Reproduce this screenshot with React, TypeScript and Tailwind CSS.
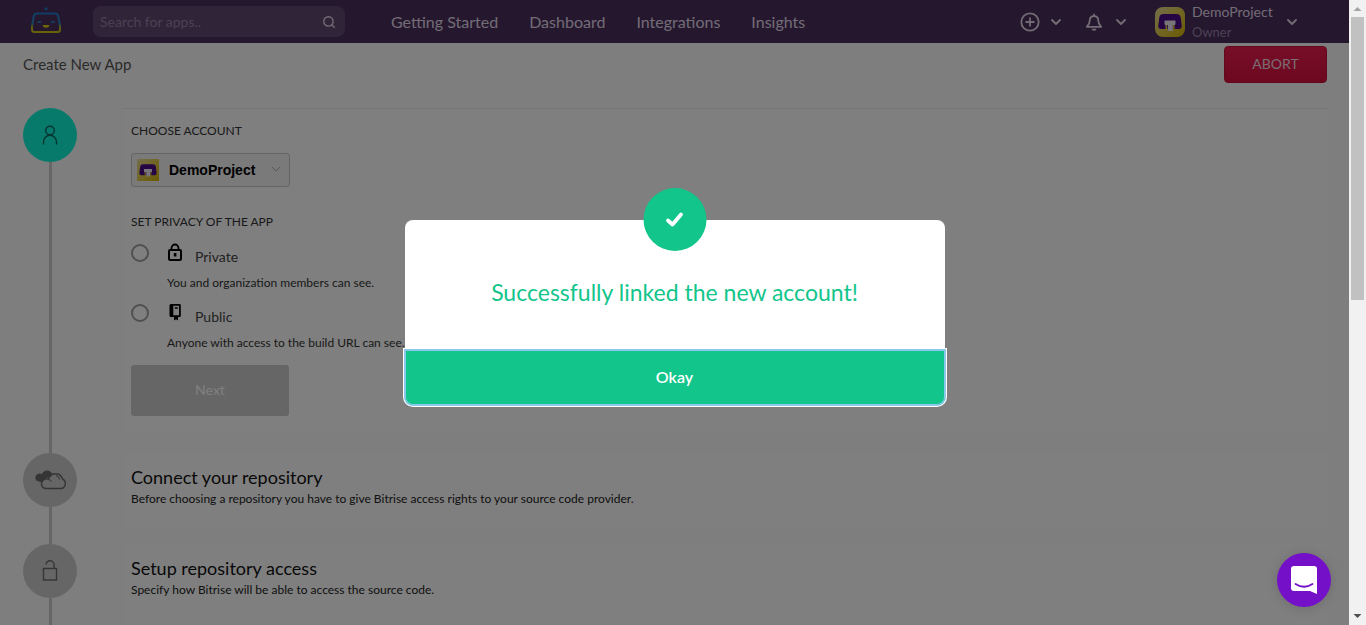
import React from "react";
import { ChevronDown, Search } from "lucide-react";

const navLinks = ["Getting Started", "Dashboard", "Integrations", "Insights"];

function RobotLogo() {
  return (
    <svg viewBox="0 0 32 28" className="h-7 w-8" fill="none" aria-hidden="true">
      <defs>
        <linearGradient id="logo" x1="0" y1="6" x2="0" y2="27" gradientUnits="userSpaceOnUse">
          <stop offset="0" stopColor="#1f78d0" />
          <stop offset="0.55" stopColor="#2f88c0" />
          <stop offset="0.72" stopColor="#b8b020" />
          <stop offset="1" stopColor="#d8cc10" />
        </linearGradient>
      </defs>
      <circle cx="16" cy="2.800" r="1.500" fill="#1f78d0" />
      <path
        d="M7 7.500h18c2 0 3 1 3.300 3l1.700 9.500v3.500c0 1.700-1 2.500-2.500 2.500h-23C3 26 2 25.200 2 23.500V20l1.700-9.500C4 8.500 5 7.500 7 7.500z"
        stroke="url(#logo)"
        strokeWidth="2"
      />
      <path d="M7.500 16.500q1.800-1.500 3.600 0M21 16.500q1.800-1.500 3.600 0" stroke="#1f88d8" strokeWidth="1.500" />
      <path d="M12.700 19h6.600a3.300 2.800 0 0 1-6.600 0z" fill="#e0cc10" />
    </svg>
  );
}

function Avatar({ className }: { className: string }) {
  return (
    <svg viewBox="0 0 30 30" className={className} aria-hidden="true">
      <defs>
        <linearGradient id="gold" x1="0" y1="0" x2="1" y2="1">
          <stop offset="0" stopColor="#e8dc98" />
          <stop offset="0.5" stopColor="#e2cc4c" />
          <stop offset="1" stopColor="#d8b400" />
        </linearGradient>
      </defs>
      <rect width="30" height="30" fill="url(#gold)" />
      <path
        d="M8.500 7h13c2.500 0 3.700 1 4.200 3.500l1 8c.3 2.300-.7 3.500-2.700 3.500h-4.500v-4H18v4h-6v-4h-1.500v4H6c-2 0-3-1.200-2.700-3.500l1-8C4.800 8 6 7 8.500 7z"
        fill="#4a0a86"
      />
      <path d="M9.500 13.500h11V17q0 1-1 1H17.800v6h-5v-6h-2.300q-1 0-1-1z" fill="#f0eaf4" />
    </svg>
  );
}

function PersonIcon() {
  return (
    <svg viewBox="0 0 16 20" className="h-5 w-4" fill="none" stroke="#07695f" strokeWidth="1.400" aria-hidden="true">
      <circle cx="8" cy="5.500" r="4.300" />
      <path d="M1.500 19.500v-2.200c0-4 2.800-7 6.500-7s6.500 3 6.500 7v2.200" />
    </svg>
  );
}

function CloudsIcon() {
  return (
    <svg viewBox="0 0 32 22" className="h-[22px] w-8" fill="none" aria-hidden="true">
      <path
        d="M4.500 12.500a3.900 3.900 0 0 1-.5-7.500 3.500 3.500 0 0 1 4 .3A5.400 5.400 0 0 1 17.800 4L19 7l-6 2-5 4z"
        fill="#6a6a6a"
      />
      <path
        d="M12 19.500a4.600 4.600 0 0 1-3.500-7.500 4.500 4.500 0 0 1 6-1.500A7.200 7.200 0 0 1 28.500 10 5 5 0 0 1 26 19.500z"
        fill="#cccccc"
        stroke="#6a6a6a"
        strokeWidth="1.400"
      />
      <path d="M22 6.800a4.500 4.500 0 0 1 3.600 3.700M14.500 10.500c1.500.2 2.300.8 3 2" stroke="#777" strokeWidth="1.100" />
    </svg>
  );
}

function UnlockIcon() {
  return (
    <svg viewBox="0 0 16 24" className="h-6 w-4" fill="none" stroke="#6a6a6a" strokeWidth="1.400" aria-hidden="true">
      <rect x="1.500" y="9.500" width="13" height="11.500" />
      <path d="M4 5.500a4 4 0 0 1 8 .5v3.500" />
    </svg>
  );
}

function LockIcon() {
  return (
    <svg viewBox="0 0 16 18" className="h-[18px] w-4" fill="none" aria-hidden="true">
      <rect x="2" y="7" width="12" height="10" rx="1" stroke="#000" strokeWidth="2" />
      <path d="M4.500 7V5a3.500 3.500 0 0 1 7 0v2" stroke="#000" strokeWidth="1.800" />
      <path d="M6.800 10h2.600v3.500H6.800z" fill="#000" />
    </svg>
  );
}

function BookIcon() {
  return (
    <svg viewBox="0 0 16 18" className="h-[18px] w-4" aria-hidden="true">
      <path
        fillRule="evenodd"
        d="M4 1h8.500q1.300 0 1.300 1.300v10.400q0 1.300-1.300 1.300H11v3.500l-2-1.200-2 1.200V14H4q-1.500 0-1.500-1.500v-10Q2.500 1 4 1zm2.300 1.700v9.600H12V2.700zm1.500 1.600h3v1.500h-3z"
        fill="#000"
      />
    </svg>
  );
}

function Step({
  icon,
  active = false,
  children,
}: {
  icon: React.ReactNode;
  active?: boolean;
  children: React.ReactNode;
}) {
  return (
    <li className="flex gap-[46px]">
      <div className="flex w-[54px] shrink-0 flex-col items-center">
        <div
          className={
            active
              ? "flex size-[54px] items-center justify-center rounded-full bg-[#0ef5d8]"
              : "flex size-[54px] items-center justify-center rounded-full bg-[#cccccc]"
          }
        >
          {icon}
        </div>
        <div className="w-[3px] flex-1 bg-[#cccccc]" />
      </div>
      {children}
    </li>
  );
}

function Privacy({ id, label, hint, icon }: { id: string; label: string; hint: string; icon: React.ReactNode }) {
  return (
    <div className="flex h-[60px] gap-[18px]">
      <input
        id={id}
        type="radio"
        name="privacy"
        className="mt-0.5 size-[18px] shrink-0 appearance-none rounded-full border-2 border-[#a0a0a0]"
      />
      <label htmlFor={id} className="block pt-px">
        <span className="flex h-6 gap-3 text-sm leading-6 text-[#444]">
          {icon}
          <span className="pt-0.5">{label}</span>
        </span>
        <span className="block pt-1 text-xs leading-6 text-[#333]">{hint}</span>
      </label>
    </div>
  );
}

export default function App() {
  return (
    <div className="relative flex h-screen overflow-hidden bg-[#fdfdfd] font-['Lato',sans-serif]">
      <div className="relative min-w-0 flex-1 overflow-hidden">
        <header className="flex h-[43px] items-center bg-[#492f5c] pr-[52px] pl-[30px] text-[#e4d8ea]">
          <a href="#home" aria-label="Home" className="-mt-1">
            <RobotLogo />
          </a>
          <div className="ml-[31px] flex h-[31px] w-[252px] items-center rounded-lg bg-[#604872] pr-[9px] pl-[7px]">
            <input
              type="search"
              aria-label="Search for apps"
              placeholder="Search for apps.."
              className="min-w-0 flex-1 bg-transparent text-sm outline-none placeholder:text-[#9882a6]"
            />
            <Search className="size-3.5" strokeWidth={2.4} />
          </div>
          <nav className="ml-[46px] flex gap-[31px] text-base">
            {navLinks.map((link) => (
              <a key={link} href="#nav" className="whitespace-nowrap">
                {link}
              </a>
            ))}
          </nav>
          <div className="ml-auto flex items-center">
            <button aria-label="Add" className="flex items-center gap-2">
              <svg viewBox="0 0 20 20" className="size-5" fill="none" stroke="currentColor" strokeWidth="1.800">
                <circle cx="10" cy="10" r="8.700" />
                <path d="M10 5.500v9M5.500 10h9" />
              </svg>
              <ChevronDown className="size-4" strokeWidth={2.8} />
            </button>
            <button aria-label="Notifications" className="ml-[21px] flex items-center gap-2.5">
              <svg viewBox="0 0 18 20" className="h-5 w-[18px]" fill="none" aria-hidden="true">
                <path
                  d="M9 4c-3 0-4.300 2.200-4.300 4.800 0 3-1.300 4.200-2.900 6h14.400c-1.600-1.800-2.900-3-2.900-6C13.300 6.200 12 4 9 4zM9 4V2.500"
                  stroke="currentColor"
                  strokeWidth="1.800"
                  strokeLinejoin="round"
                  strokeLinecap="round"
                />
                <path d="M6.500 16.800h5a2.500 2 0 0 1-5 0z" fill="currentColor" />
              </svg>
              <ChevronDown className="size-4" strokeWidth={2.8} />
            </button>
            <button className="ml-[26px] flex items-center text-left">
              <Avatar className="size-[30px] rounded-lg" />
              <span className="ml-[7px] w-[92px] text-sm leading-5">
                <span className="block">DemoProject</span>
                <span className="block text-[13px] text-[#9882a6]">Owner</span>
              </span>
              <ChevronDown className="-mr-[3px] size-4" strokeWidth={2.8} />
            </button>
          </div>
        </header>

        <main className="pr-[22px] pl-[23px]">
          <div className="flex h-[65px] items-start justify-between pt-[3px]">
            <h1 className="pt-1.5 text-[15px] leading-6 text-[#555]">Create New App</h1>
            <button className="h-[37px] w-[103px] rounded-sm border border-[#c8103c] bg-linear-to-b from-[#f01c50] to-[#d8103e] pb-0.5 text-sm text-[#f4dce4]">
              ABORT
            </button>
          </div>

          <ol>
            <Step active icon={<PersonIcon />}>
              <section className="mb-5 flex-1 border-t border-[#ececec] bg-white px-2 pt-3 pb-[17px]">
                <label htmlFor="account" className="block text-xs leading-5 text-[#333]">
                  CHOOSE ACCOUNT
                </label>
                <div className="relative mt-3 h-[34px] w-[159px]">
                  <select
                    id="account"
                    className="size-full appearance-none rounded-[3px] border border-[#c8c8c8] bg-[#f4f4f4] pl-[37px] font-['Liberation_Sans',sans-serif] text-sm font-bold text-black"
                  >
                    <option>DemoProject</option>
                  </select>
                  <Avatar className="pointer-events-none absolute top-1.5 left-1.5 size-[22px]" />
                  <ChevronDown
                    className="pointer-events-none absolute top-2 right-1.5 size-4 text-[#b0b0b0]"
                    strokeWidth={1.5}
                  />
                </div>
                <fieldset>
                  <legend className="pt-[25px] pb-2.5 text-xs leading-5 text-[#333]">SET PRIVACY OF THE APP</legend>
                  <Privacy id="private" label="Private" hint="You and organization members can see." icon={<LockIcon />} />
                  <Privacy id="public" label="Public" hint="Anyone with access to the build URL can see." icon={<BookIcon />} />
                </fieldset>
                <button
                  disabled
                  className="mt-[3px] block h-[51px] w-[158px] rounded-[3px] bg-[#cdcdcd] pb-0.5 text-sm text-white"
                >
                  Next
                </button>
              </section>
            </Step>
            <Step icon={<CloudsIcon />}>
              <section className="mb-[15px] flex-1 bg-white px-2 pt-3 pb-5 text-[#111]">
                <h2 className="text-lg leading-6">Connect your repository</h2>
                <p className="text-xs leading-5 text-[#222]">
                  Before choosing a repository you have to give Bitrise access rights to your source code provider.
                </p>
              </section>
            </Step>
            <Step icon={<UnlockIcon />}>
              <section className="mb-[15px] flex-1 bg-white px-2 pt-3 pb-9 text-[#111]">
                <h2 className="text-lg leading-6">Setup repository access</h2>
                <p className="text-xs leading-5 text-[#222]">
                  Specify how Bitrise will be able to access the source code.
                </p>
              </section>
            </Step>
          </ol>
        </main>

        <div className="absolute inset-0 flex items-center justify-center bg-black/50">
          <div role="dialog" aria-modal="true" aria-labelledby="dialog-title" className="relative w-[540px] rounded-lg bg-white">
            <div className="absolute -top-8 left-1/2 flex size-[63px] -translate-x-1/2 items-center justify-center rounded-full bg-[#11c58b]">
              <svg viewBox="0 0 20 18" className="h-[18px] w-5" fill="none" aria-hidden="true">
                <path d="M3.500 9.500l4.500 4L16.500 3.500" stroke="#fff" strokeWidth="3.800" strokeLinecap="round" strokeLinejoin="round" />
              </svg>
            </div>
            <h2 id="dialog-title" className="px-8 pt-14 pb-[42px] text-center text-[23px] leading-8 text-[#11c58b]">
              Successfully linked the new account!
            </h2>
            <button className="block h-[55px] w-full rounded-b-lg bg-[#11c58b] pb-0.5 text-base font-semibold text-white shadow-[inset_0_0_0_1px_#8cc8ec,0_0_0_1px_#8cc8ec,0_0_0_2px_#ffffff]">
              Okay
            </button>
          </div>
        </div>

        <button
          aria-label="Open chat"
          className="absolute right-[18px] bottom-[18px] flex size-[54px] items-center justify-center rounded-full bg-[#7310c8] shadow-[0_1px_12px_rgba(0,0,0,0.15)]"
        >
          <svg viewBox="0 0 28 30" className="h-[30px] w-7" aria-hidden="true">
            <path d="M4 1h20q3 0 3 3v25l-7-3H4q-3 0-3-3V4q0-3 3-3z" fill="#fff" />
            <path d="M5.500 19q8.500 5.500 17 0" fill="none" stroke="#7310c8" strokeWidth="1.800" strokeLinecap="round" />
          </svg>
        </button>
      </div>

      <div className="flex w-[17px] shrink-0 flex-col items-center bg-[#f1f1f1]" aria-hidden="true">
        <svg viewBox="0 0 17 17" className="size-[17px]">
          <path d="M4.500 11L8.500 7l4 4z" fill="#a3a3a3" />
        </svg>
        <div className="h-[283px] w-[13px] bg-[#c1c1c1]" />
        <svg viewBox="0 0 17 17" className="mt-auto size-[17px]">
          <path d="M4.500 6L8.500 10l4-4z" fill="#505050" />
        </svg>
      </div>
    </div>
  );
}
